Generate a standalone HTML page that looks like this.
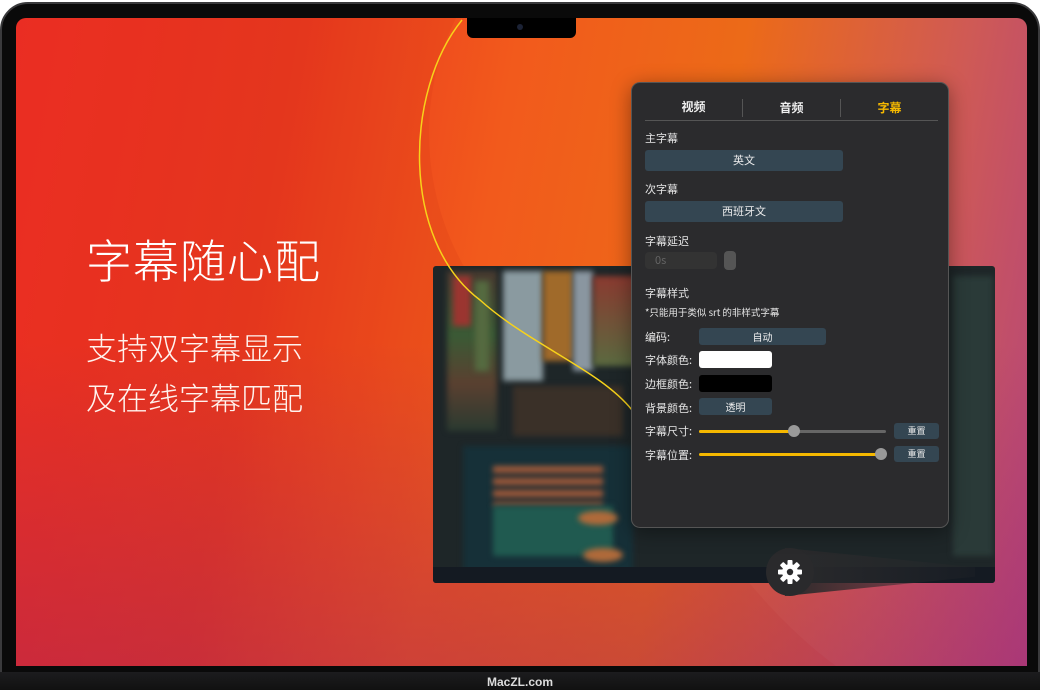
<!DOCTYPE html>
<html><head><meta charset="utf-8"><style>
*{margin:0;padding:0;box-sizing:border-box}
body{width:1040px;height:690px;background:#fff;position:relative;overflow:hidden;font-family:"Liberation Sans","Noto Sans CJK SC",sans-serif}
.frame{position:absolute;left:0;top:2px;width:1040px;height:688px;background:#0a0a0a;border-radius:28px 28px 0 0;border:2px solid #3a3a3c}
.bottom{position:absolute;left:0;top:672px;width:1040px;height:18px;background:linear-gradient(#1c1c1e,#111);text-align:center;color:#ddd;font-size:12px;line-height:20px;font-weight:bold}
.screen{position:absolute;left:16px;top:18px;width:1011px;height:648px;border-radius:10px 10px 0 0;overflow:hidden;
background:linear-gradient(100deg,#f02e26 0%,#e9381f 25%,#f25a1c 45%,#ec6a18 65%,#cf5a55 85%,#b4457c 100%)}
.ov{position:absolute;inset:0;background:linear-gradient(180deg,rgba(0,0,0,0) 0%,rgba(0,0,0,0) 50%,rgba(150,30,110,.35) 100%)}
.notch{position:absolute;left:467px;top:18px;width:109px;height:20px;background:#000;border-radius:0 0 6px 6px}
.cam{position:absolute;width:6px;height:6px;border-radius:50%;background:#1b2235}
h1{position:absolute;left:86px;top:226px;color:#fff;font-size:46px;font-weight:300;letter-spacing:1px;font-family:"Noto Sans CJK SC",sans-serif}
.sub{position:absolute;left:86px;top:322px;font-size:31px;line-height:50px;font-weight:300;font-family:"Noto Sans CJK SC",sans-serif;color:#fff3ee}
.video{position:absolute;left:433px;top:266px;width:562px;height:317px;background:#1e2628;border-radius:3px;overflow:hidden}
.video div{position:absolute;filter:blur(3px)}
.vbar{position:absolute;left:0;bottom:0;width:100%;height:16px;background:#141a22;filter:none!important}
.panel{position:absolute;left:631px;top:82px;width:318px;height:446px;background:#2b2b2d;border-radius:9px;border:1px solid #555;box-shadow:0 4px 20px rgba(0,0,0,.4);color:#e6e6e6;font-size:11px;font-family:"Noto Sans CJK SC",sans-serif}
.tabs{position:absolute;left:13px;top:10px;width:293px;height:28px;border-bottom:1px solid #555;display:flex}
.tabs div{flex:1;text-align:center;line-height:28px;font-size:12px;font-weight:bold;color:#f0f0f0}
.tabs div+div{border-left:1px solid #555;height:18px;margin-top:6px;line-height:18px}
.lbl{position:absolute;left:13px;font-size:11px}
.btn{position:absolute;background:#344652;border-radius:3px;text-align:center;color:#eee;font-size:11px}
.sl{position:absolute;height:3px;background:#666;border-radius:2px}
.knob{position:absolute;width:12px;height:12px;border-radius:50%;background:#999}
.gear{position:absolute;left:766px;top:548px;width:48px;height:48px;border-radius:50%;background:#2a2a2c}
.tail{position:absolute;left:785px;top:548px;width:190px;height:48px;background:linear-gradient(90deg,#2a2a2c,rgba(40,40,44,.2));clip-path:polygon(0 0,100% 40%,100% 60%,0 100%)}
</style></head><body>
<div class="frame"></div>
<div class="screen">
<svg width="1011" height="648" style="position:absolute;left:0;top:0">
<path d="M440 0 C380 120,420 280,560 360 C640 410,700 560,820 648 L0 648 L0 0Z" fill="rgba(200,40,20,.12)"/>
</svg>
<div class="ov"></div>
</div>
<div class="video">
<div style="left:14px;top:5px;width:50px;height:160px;background:linear-gradient(180deg,#4a3a30,#3a5a35 40%,#5a4030 70%,#2a3a30);"></div>
<div style="left:20px;top:10px;width:18px;height:50px;background:#9b3530"></div>
<div style="left:42px;top:15px;width:14px;height:90px;background:#556a40"></div>
<div style="left:70px;top:5px;width:40px;height:110px;background:#8a9aa0"></div>
<div style="left:110px;top:5px;width:30px;height:90px;background:#a06a2a"></div>
<div style="left:140px;top:5px;width:20px;height:100px;background:#8a96a0"></div>
<div style="left:160px;top:10px;width:45px;height:90px;background:linear-gradient(180deg,#8a3a30,#5a6a40)"></div>
<div style="left:80px;top:120px;width:110px;height:50px;background:#3a3028"></div>
<div style="left:30px;top:180px;width:170px;height:130px;background:#163038"></div>
<div style="left:60px;top:200px;width:110px;height:40px;background:repeating-linear-gradient(180deg,#a05a3a 0 7px,#1a2a30 7px 12px)"></div>
<div style="left:60px;top:240px;width:120px;height:50px;background:#205a50"></div>
<div style="left:145px;top:245px;width:40px;height:14px;border-radius:50%;background:#b06a3a"></div>
<div style="left:150px;top:282px;width:40px;height:14px;border-radius:50%;background:#b06a3a"></div>
<div style="left:520px;top:10px;width:40px;height:280px;background:#2a3a38"></div>
<div class="vbar"></div>
</div>
<svg width="1040" height="690" style="position:absolute;left:0;top:0">
<path d="M462 20 C405 90,400 240,480 300 C530 345,600 370,632 410" stroke="#f7d21a" stroke-width="1.5" fill="none"/>
</svg>
<div class="notch"><div class="cam" style="left:50px;top:6px"></div></div>
<h1>字幕随心配</h1>
<div class="sub">支持双字幕显示<br>及在线字幕匹配</div>
<div class="tail"></div>
<div class="gear">
<svg width="48" height="48" viewBox="0 0 48 48"><g fill="#fff" transform="translate(24 24)">
<circle r="8"/>
<g id="t"><rect x="-2.5" y="-12" width="5" height="5" rx="1"/></g>
<use href="#t" transform="rotate(45)"/><use href="#t" transform="rotate(90)"/><use href="#t" transform="rotate(135)"/>
<use href="#t" transform="rotate(180)"/><use href="#t" transform="rotate(225)"/><use href="#t" transform="rotate(270)"/><use href="#t" transform="rotate(315)"/>
<circle r="3.2" fill="#2a2a2c"/></g></svg>
</div>
<div class="panel">
<div class="tabs"><div>视频</div><div>音频</div><div style="color:#f5b800">字幕</div></div>
<div class="lbl" style="top:47px">主字幕</div>
<div class="btn" style="left:13px;top:67px;width:198px;height:21px;line-height:21px">英文</div>
<div class="lbl" style="top:98px">次字幕</div>
<div class="btn" style="left:13px;top:118px;width:198px;height:21px;line-height:21px">西班牙文</div>
<div class="lbl" style="top:150px">字幕延迟</div>
<div style="position:absolute;left:13px;top:169px;width:72px;height:17px;background:#333;border-radius:4px;color:#666;padding-left:10px;line-height:17px">0s</div>
<div style="position:absolute;left:92px;top:168px;width:12px;height:19px;background:#555;border-radius:4px"></div>
<div class="lbl" style="top:202px">字幕样式</div>
<div class="lbl" style="top:222px;font-size:9.5px">*只能用于类似 srt 的非样式字幕</div>
<div class="lbl" style="top:246px">编码:</div>
<div class="btn" style="left:67px;top:245px;width:127px;height:17px;line-height:17px;font-size:10px">自动</div>
<div class="lbl" style="top:269px">字体颜色:</div>
<div style="position:absolute;left:67px;top:268px;width:73px;height:17px;background:#fff;border-radius:3px"></div>
<div class="lbl" style="top:293px">边框颜色:</div>
<div style="position:absolute;left:67px;top:292px;width:73px;height:17px;background:#000;border-radius:3px"></div>
<div class="lbl" style="top:317px">背景颜色:</div>
<div class="btn" style="left:67px;top:315px;width:73px;height:17px;line-height:17px;font-size:10px">透明</div>
<div class="lbl" style="top:340px">字幕尺寸:</div>
<div class="sl" style="left:67px;top:347px;width:187px"></div>
<div class="sl" style="left:67px;top:347px;width:94px;background:#f5b800"></div>
<div class="knob" style="left:156px;top:342px"></div>
<div class="btn" style="left:262px;top:340px;width:45px;height:16px;line-height:16px;font-size:9px">重置</div>
<div class="lbl" style="top:364px">字幕位置:</div>
<div class="sl" style="left:67px;top:370px;width:181px;background:#f5b800"></div>
<div class="knob" style="left:243px;top:365px"></div>
<div class="btn" style="left:262px;top:363px;width:45px;height:16px;line-height:16px;font-size:9px">重置</div>
</div>
<div class="bottom">MacZL.com</div>
</body></html>
